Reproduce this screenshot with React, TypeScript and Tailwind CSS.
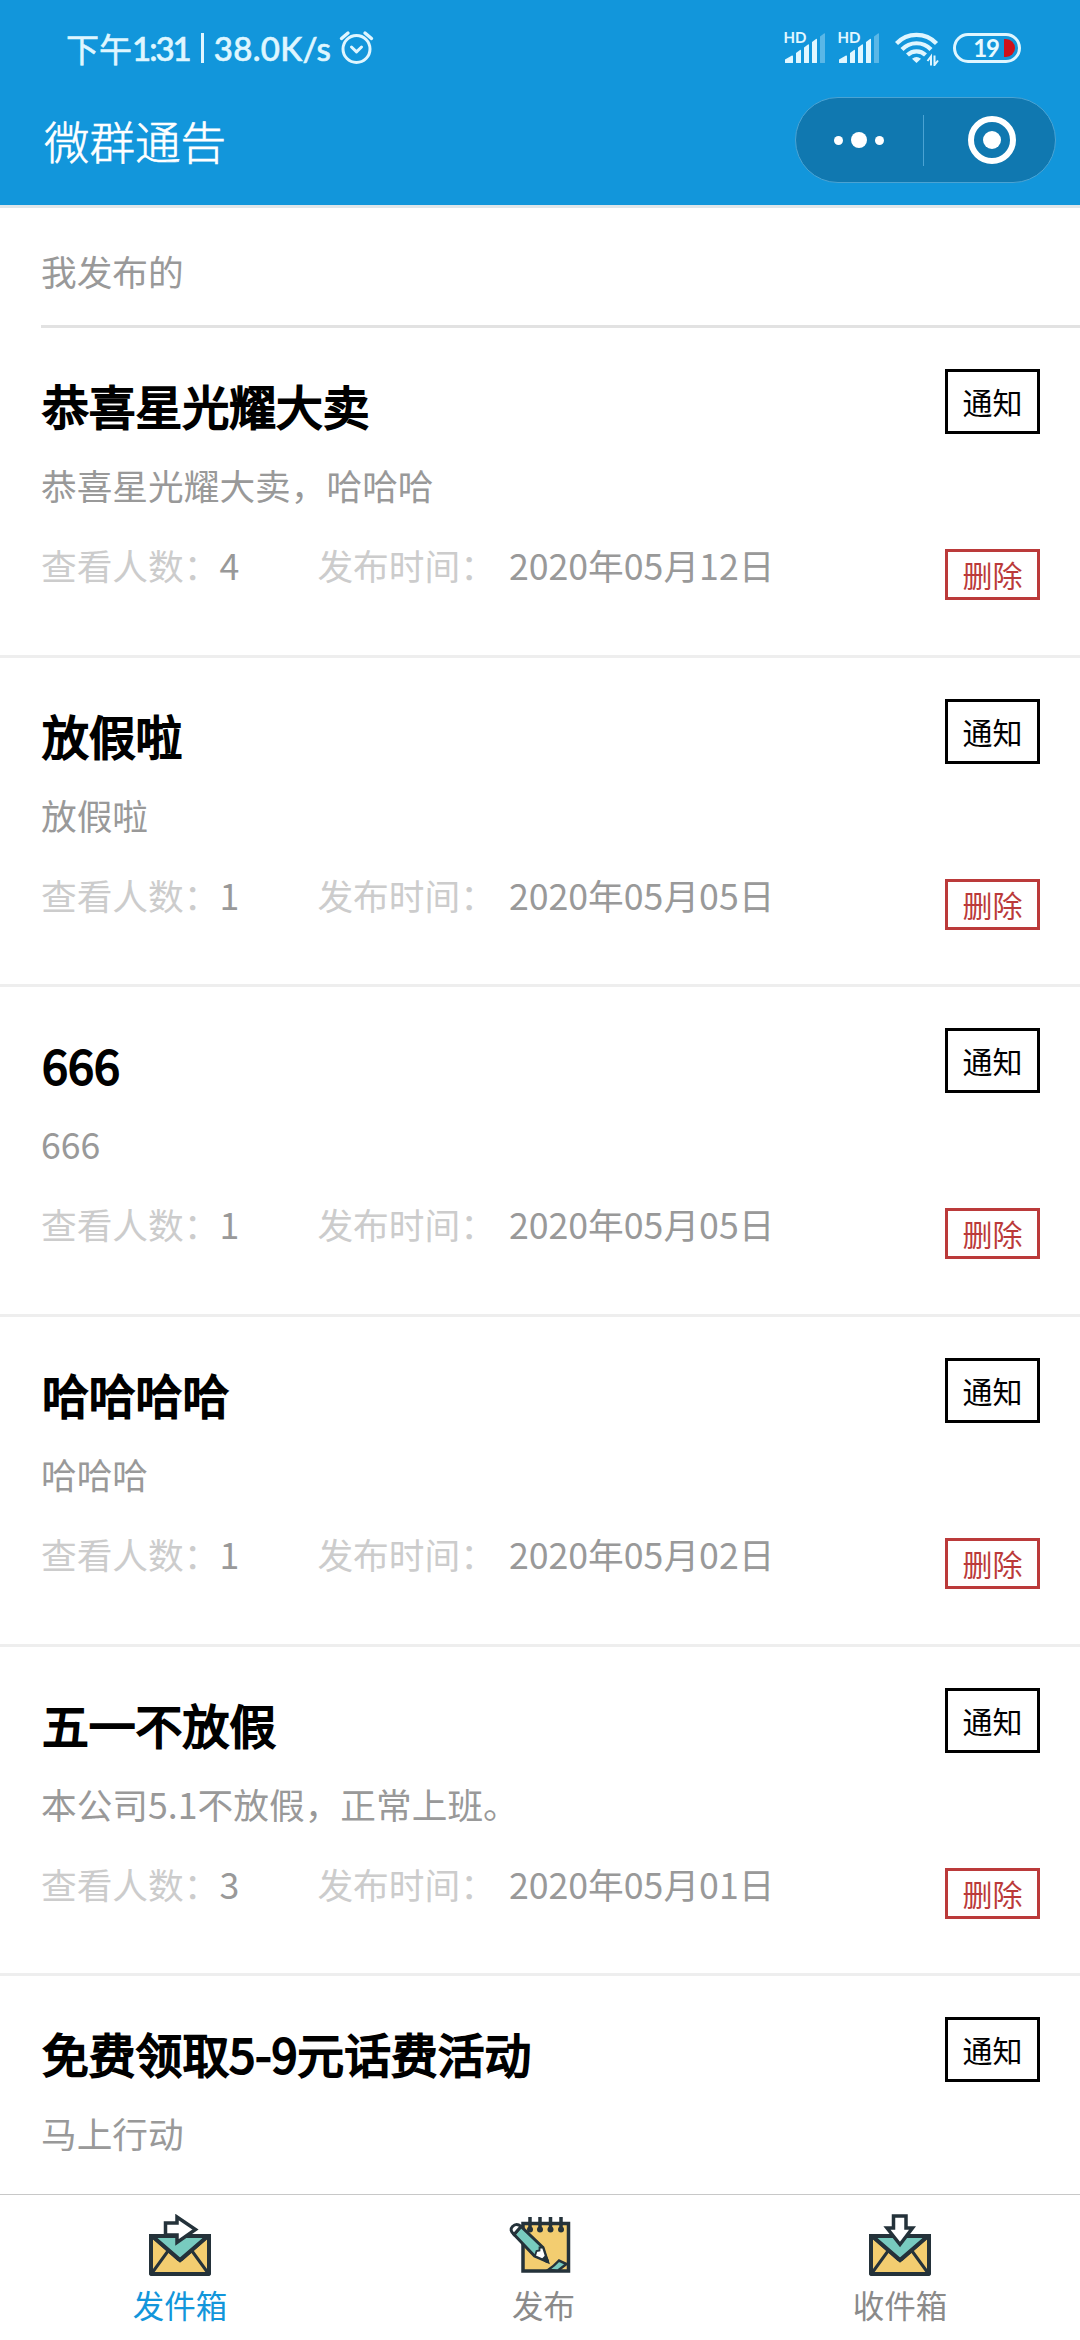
interface Notice {
  title: string;
  content: string;
  views?: number;
  date?: string;
}

const notices: Notice[] = [
  { title: '恭喜星光耀大卖', content: '恭喜星光耀大卖，哈哈哈', views: 4, date: '2020年05月12日' },
  { title: '放假啦', content: '放假啦', views: 1, date: '2020年05月05日' },
  { title: '666', content: '666', views: 1, date: '2020年05月05日' },
  { title: '哈哈哈哈', content: '哈哈哈', views: 1, date: '2020年05月02日' },
  { title: '五一不放假', content: '本公司5.1不放假，正常上班。', views: 3, date: '2020年05月01日' },
  { title: '免费领取5-9元话费活动', content: '马上行动' },
];

function AlarmIcon() {
  return (
    <svg width="35" height="36" viewBox="0 0 35 36" fill="none" stroke="#dff6ff" strokeWidth="3" strokeLinecap="round">
      <circle cx="17.5" cy="19" r="13.5" />
      <path d="M2.5 8.5 9 3M32.5 8.5 26 3" strokeWidth="3.4" />
      <path d="m12.5 17 5 4.8 5-4.8" strokeLinejoin="round" />
    </svg>
  );
}

function SignalIcon() {
  return (
    <svg width="43" height="36" viewBox="0 -4 43 36" fill="#e2f7ff" className="-mt-[4px]">
      <text x="0.5" y="11" fontSize="15" fontWeight="700" fontFamily="Lato, sans-serif" textLength="23">
        HD
      </text>
      <path d="M2 30.5v-3l7-4q1-.4 1 1v6q0 .5-.6.5H2.6q-.6 0-.6-.5z" />
      <path d="M13 21l4-3q1-.5 1 .6v11.8q0 .6-.6.6h-3.8q-.6 0-.6-.6z" />
      <path d="M21 15.5l4-3q1-.5 1 .6v17.3q0 .6-.6.6h-3.8q-.6 0-.6-.6z" />
      <path d="M29 10l4-3q1-.5 1 .6v22.8q0 .6-.6.6h-3.8q-.6 0-.6-.6z" />
      <path d="M37 4.5l4-3q1-.5 1 .6v28.3q0 .6-.6.6h-3.8q-.6 0-.6-.6z" opacity=".35" />
    </svg>
  );
}

function WifiIcon() {
  return (
    <svg width="44" height="36" viewBox="0 0 44 36" fill="none" stroke="#dff6ff" strokeWidth="4.2">
      <path d="M1.5 13.5a27.5 27.5 0 0 1 40 0" />
      <path d="M7 19.5a20 20 0 0 1 29 0" />
      <path d="M12.5 25a12.8 12.8 0 0 1 18 0" />
      <path d="m21.5 33-4.5-4.2q4.5-3.6 9 0z" fill="#dff6ff" stroke="none" />
      <path d="M36 35.5V27l-3.5 3.5M39.5 25.5v9L43 31" stroke="#1296db" strokeWidth="5" />
      <path d="M36 35.5v-9L32.5 31M39.5 25.5V35l3.5-4.500" strokeWidth="2" />
    </svg>
  );
}

function Battery() {
  return (
    <div className="flex h-[30px] w-[68px] items-center justify-end rounded-full border-[3px] border-[#dff6ff] pr-[3px]">
      <span className="mr-[5px] font-[Lato,sans-serif] text-[24px] leading-none font-bold tracking-[-1px] text-[#e8faff]">
        19
      </span>
      <span className="h-[18px] w-[11px] rounded-l-[2px] rounded-r-full bg-[#d0111b]" />
    </div>
  );
}

function StatusBar() {
  return (
    <div className="flex h-[96px] items-center justify-between pr-[59px] pl-[66px]">
      <div className="flex items-center text-[#dff6ff] [-webkit-text-stroke:0.6px_#dff6ff]">
        <span className="text-[33px] leading-none">下午</span>
        <span className="font-[Lato,sans-serif] text-[33px] leading-none font-medium tracking-[-2px]">1:31</span>
        <span className="ml-[11px] h-[30px] w-[3px] bg-[#dff6ff]" />
        <span className="ml-[10px] font-[Lato,sans-serif] text-[33px] leading-none font-medium tracking-[0.3px]">
          38.0K/s
        </span>
        <span className="ml-[8px]">
          <AlarmIcon />
        </span>
      </div>
      <div className="flex items-center">
        <SignalIcon />
        <span className="ml-[11px]">
          <SignalIcon />
        </span>
        <span className="mr-[14px] ml-[15px]">
          <WifiIcon />
        </span>
        <Battery />
      </div>
    </div>
  );
}

function Capsule() {
  return (
    <div className="flex h-[86px] w-[261px] items-center rounded-full border border-[#4ba3d3] bg-[#1078b0]">
      <div className="flex flex-1 items-center justify-center gap-[8px]">
        <span className="size-[9px] rounded-full bg-white" />
        <span className="size-[16px] rounded-full bg-white" />
        <span className="size-[9px] rounded-full bg-white" />
      </div>
      <div className="h-[51px] w-px bg-[#4ba3d3]" />
      <div className="flex flex-1 items-center justify-center pl-[5px]">
        <div className="flex size-[48px] items-center justify-center rounded-full border-[6px] border-white">
          <span className="size-[18px] rounded-full bg-white" />
        </div>
      </div>
    </div>
  );
}

function NoticeItem({ notice }: { notice: Notice }) {
  return (
    <div className="flex h-[329.65px] shrink-0 justify-between border-b-[3px] border-[#eeeeee] pt-[37px] pr-[40px] pl-[41px]">
      <div className="leading-[80px]">
        <h2 className="pl-px text-[46.8px] font-normal text-black [-webkit-text-stroke:2px_#000]">{notice.title}</h2>
        <p className="text-[35.7px] text-[#999999]">{notice.content}</p>
        {notice.date && (
          <p className="flex text-[35.7px] text-[#999999]">
            <span className="text-[#cccccc]">查看人数：</span>
            <span className="w-[98px]">{notice.views}</span>
            <span className="mr-[13px] text-[#cccccc]">发布时间：</span>
            <span>{notice.date}</span>
          </p>
        )}
      </div>
      <div className="flex w-[95px] flex-col pt-[4px] text-center text-[30px]">
        <span className="h-[65px] border-[3px] border-black leading-[59px] text-black">通知</span>
        {notice.date && (
          <span className="mt-[115px] h-[51px] border-[3px] border-[#bb3a3a] leading-[45px] text-[#bb3a3a]">删除</span>
        )}
      </div>
    </div>
  );
}

function Envelope() {
  return (
    <>
      <rect x="2" y="22" width="58" height="38" rx="1" fill="#f3cd70" />
      <path d="M3 22h56L31 46z" fill="#78cbbf" />
      <path d="m3 59 16-22M59 59 43 37" strokeWidth="3" />
      <path d="m3 22 26 23q2 1.5 4 0l26-23" strokeWidth="3.5" />
      <rect x="2" y="22" width="58" height="38" rx="1" />
    </>
  );
}

function OutboxIcon() {
  return (
    <svg width="62" height="62" viewBox="0 0 62 62" fill="none" stroke="#24323a" strokeWidth="4">
      <Envelope />
      <path d="M16.5 21V9H28V3l18.5 12.5L28 28.5V21z" fill="#fff" strokeWidth="3.5" />
    </svg>
  );
}

function InboxIcon() {
  return (
    <svg width="62" height="62" viewBox="0 0 62 62" fill="none" stroke="#24323a" strokeWidth="4">
      <Envelope />
      <path d="M24.5 2H37v12h6.5L31 30.5 18 14h6.5z" fill="#fff" strokeWidth="3.5" />
    </svg>
  );
}

function PublishIcon() {
  return (
    <svg width="62" height="62" viewBox="0 0 62 62" fill="none" stroke="#24323a" strokeWidth="3.5">
      <rect x="14" y="9.5" width="45.5" height="47.5" fill="#f3cd70" />
      <path d="M21 3v11M31 3v11M41.500 3v11M52 3v11" />
      <g fill="#24323a" stroke="none">
        <circle cx="21" cy="15.5" r="3" />
        <circle cx="31" cy="15.5" r="3" />
        <circle cx="41.5" cy="15.5" r="3" />
        <circle cx="52" cy="15.5" r="3" />
      </g>
      <path d="M39 56q6-4 11-9.500l7.500 3.500-8.500 6.500z" fill="#78cbbf" strokeWidth="2.5" />
      <path d="M5 20.500 12 12.500 34 33.500 38.500 47.500 25.500 42z" fill="#78cbbf" strokeWidth="3" />
      <path d="M5 20.500Q0 16 3.500 12.500 7.500 8.500 12 12.500z" fill="#fff" strokeWidth="3" />
      <path d="m26 42 1.500-5 3-.5 0-3 3.500 0 4.500 14z" fill="#fff" strokeWidth="1.8" />
      <path d="m35 45 1.500-1.500 2 4z" fill="#24323a" />
    </svg>
  );
}

function TabBar() {
  return (
    <nav className="flex h-[146px] shrink-0 border-t border-[#c8c8c8] bg-white text-[31.5px] leading-[44px] text-[#8a8a8a]">
      <div className="flex flex-1 flex-col items-center gap-[6px] pt-[19px] text-[#1296db]">
        <OutboxIcon />
        <span>发件箱</span>
      </div>
      <div className="flex flex-1 flex-col items-center gap-[6px] pt-[19px]">
        <PublishIcon />
        <span className="pl-[7px]">发布</span>
      </div>
      <div className="flex flex-1 flex-col items-center gap-[6px] pt-[19px]">
        <InboxIcon />
        <span>收件箱</span>
      </div>
    </nav>
  );
}

export default function App() {
  return (
    <div className="flex h-[2340px] w-[1080px] flex-col overflow-hidden bg-white font-['Noto_Sans_CJK_SC',sans-serif]">
      <header className="h-[205px] shrink-0 bg-[#1296db]">
        <StatusBar />
        <div className="flex items-start justify-between pt-px pr-[24px] pl-[44px]">
          <h1 className="text-[45.5px] leading-[86px] font-light text-white [-webkit-text-stroke:0.6px_#fff]">微群通告</h1>
          <Capsule />
        </div>
      </header>

      <main className="flex min-h-0 flex-1 flex-col overflow-hidden border-t-[3px] border-[#dfe6ea]">
        <div className="ml-[41px] h-[120px] shrink-0 border-b-[3px] border-[#e2e2e2] text-[35.7px] leading-[126px] text-[#999999]">
          我发布的
        </div>
        {notices.map((notice) => (
          <NoticeItem key={notice.title} notice={notice} />
        ))}
      </main>

      <TabBar />
    </div>
  );
}
